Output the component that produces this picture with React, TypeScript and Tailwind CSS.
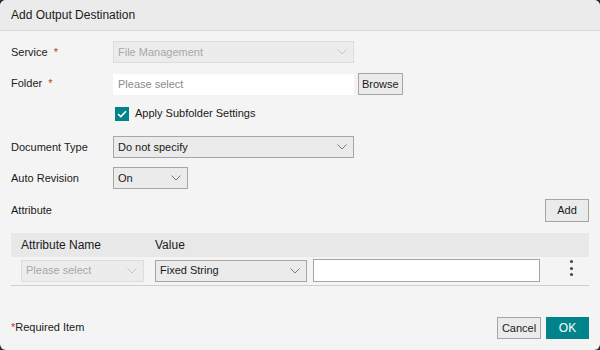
import React, { useState } from "react";

function Chevron({ className = "" }: { className?: string }) {
  return (
    <svg width="10" height="6" viewBox="0 0 10 6" className={className}>
      <path d="M0.5 0.5 L5 5 L9.5 0.5" fill="none" stroke="currentColor" strokeWidth="1" />
    </svg>
  );
}

function Select({
  value,
  width,
  disabled,
}: {
  value: string;
  width: string;
  disabled?: boolean;
}) {
  return (
    <div
      className={`${width} h-[22px] flex items-center justify-between pl-[4px] pr-[6px] border ${
        disabled
          ? "bg-[#ececec] border-[#dcdcdc] text-[#a8a8a8]"
          : "bg-[#ebebeb] border-[#a6a6a6] text-[#1a1a1a]"
      }`}
    >
      <span>{value}</span>
      <Chevron className={disabled ? "text-[#c4c4c4]" : "text-[#777]"} />
    </div>
  );
}

function Required() {
  return <span className="text-[#c0392b] ml-[6px]">*</span>;
}

export default function App() {
  const [subfolder, setSubfolder] = useState(true);

  return (
    <div className="w-[600px] h-[350px] bg-[#2e2e2e] text-[11px] text-[#1a1a1a] font-['Liberation_Sans',Arial,sans-serif]">
      <div className="w-full h-full rounded-[6px] overflow-hidden bg-[#f4f4f4] flex flex-col">
        <div className="h-[31px] bg-[#ebebeb] border-b border-[#dadada] flex items-center px-[11px] text-[12px] shrink-0">
          Add Output Destination
        </div>

        <div className="flex flex-col px-[11px] pt-[10px]">
          <div className="flex items-center h-[22px]">
            <div className="w-[102px]">
              Service
              <Required />
            </div>
            <Select value="File Management" width="w-[241px]" disabled />
          </div>

          <div className="flex items-center h-[22px] mt-[10px]">
            <div className="w-[102px] self-start pt-[2px]">
              Folder
              <Required />
            </div>
            <div className="w-[241px] h-[21px] bg-white flex items-center pl-[5px] text-[#8a8a8a]">
              Please select
            </div>
            <button className="ml-[4px] h-[22px] px-[3px] border border-[#a6a6a6] bg-[#ebebeb] text-[#1a1a1a]">
              Browse
            </button>
          </div>

          <label className="flex items-center ml-[104px] mt-[11px] h-[15px]">
            <span
              className="w-[14px] h-[14px] bg-[#00838a] flex items-center justify-center"
              onClick={() => setSubfolder(!subfolder)}
            >
              {subfolder && (
                <svg width="10" height="8" viewBox="0 0 10 8">
                  <path d="M1 4 L3.8 6.6 L9 1.2" fill="none" stroke="white" strokeWidth="1.6" />
                </svg>
              )}
            </span>
            <span className="ml-[6px]">Apply Subfolder Settings</span>
          </label>

          <div className="flex items-center h-[22px] mt-[15px]">
            <div className="w-[102px]">Document Type</div>
            <Select value="Do not specify" width="w-[241px]" />
          </div>

          <div className="flex items-center h-[22px] mt-[9px]">
            <div className="w-[102px]">Auto Revision</div>
            <Select value="On" width="w-[75px]" />
          </div>

          <div className="flex items-center justify-between h-[23px] mt-[10px]">
            <div>Attribute</div>
            <button className="w-[44px] h-[23px] border border-[#a6a6a6] bg-[#ebebeb]">Add</button>
          </div>

          <div className="mt-[11px] border-b border-[#cfcfcf]">
            <div className="h-[24px] bg-[#e8e8e8] flex items-center text-[12px]">
              <div className="w-[144px] pl-[10px]">Attribute Name</div>
              <div>Value</div>
            </div>
            <div className="flex items-center h-[28px] pl-[10px] pb-[1px]">
              <Select value="Please select" width="w-[123px]" disabled />
              <div className="ml-[11px]">
                <Select value="Fixed String" width="w-[152px]" />
              </div>
              <div className="ml-[6px] w-[227px] h-[23px] bg-white border border-[#a6a6a6]" />
              <div className="ml-[30px] flex flex-col items-center gap-[3.5px] -mt-[5px]">
                <span className="w-[3px] h-[3px] rounded-full bg-[#444]" />
                <span className="w-[3px] h-[3px] rounded-full bg-[#444]" />
                <span className="w-[3px] h-[3px] rounded-full bg-[#444]" />
              </div>
            </div>
          </div>

          <div className="flex items-center justify-between mt-[31px]">
            <div className="-mt-[2px]">
              <span className="text-[#c0392b]">*</span>Required Item
            </div>
            <div className="flex gap-[5px]">
              <button className="w-[44px] h-[22px] border border-[#a6a6a6] bg-[#ebebeb]">Cancel</button>
              <button className="w-[43px] h-[22px] bg-[#00838a] text-white text-[12px]">OK</button>
            </div>
          </div>
        </div>
      </div>
    </div>
  );
}
